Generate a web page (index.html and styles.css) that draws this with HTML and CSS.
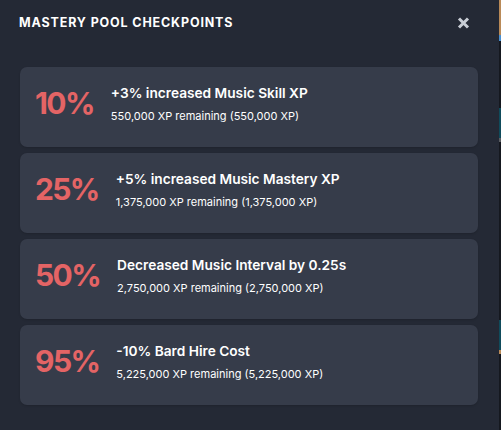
FILE: index.html
```html
<!DOCTYPE html>
<html>
<head>
<meta charset="utf-8">
<link rel="stylesheet" href="styles.css">
</head>
<body>
<div class="page">
  <div class="modal">
    <div class="header">
      <h2 class="title">MASTERY POOL CHECKPOINTS</h2>
      <button class="close" aria-label="Close">
        <svg width="13" height="12" viewBox="0 0 13 12"><path d="M2 1.5 L11 10.5 M11 1.5 L2 10.5" stroke="#c8cdd5" stroke-width="3" stroke-linecap="butt"/></svg>
      </button>
    </div>
    <div class="list">
      <div class="card">
        <div class="pct">10%</div>
        <div class="info">
          <div class="name">+3% increased Music Skill XP</div>
          <div class="sub">550,000 XP remaining (550,000 XP)</div>
        </div>
      </div>
      <div class="card">
        <div class="pct">25%</div>
        <div class="info">
          <div class="name">+5% increased Music Mastery XP</div>
          <div class="sub">1,375,000 XP remaining (1,375,000 XP)</div>
        </div>
      </div>
      <div class="card">
        <div class="pct">50%</div>
        <div class="info">
          <div class="name">Decreased Music Interval by 0.25s</div>
          <div class="sub">2,750,000 XP remaining (2,750,000 XP)</div>
        </div>
      </div>
      <div class="card">
        <div class="pct">95%</div>
        <div class="info">
          <div class="name">-10% Bard Hire Cost</div>
          <div class="sub">5,225,000 XP remaining (5,225,000 XP)</div>
        </div>
      </div>
    </div>
  </div>
  <div class="strip">
    <div class="seg s-orange"></div>
    <div class="seg s-blue"></div>
    <div class="seg s-dark1"></div>
    <div class="seg s-teal1"></div>
    <div class="seg s-gray"></div>
    <div class="seg s-dark2"></div>
    <div class="seg s-teal2"></div>
    <div class="seg s-orange2"></div>
    <div class="seg s-dark3"></div>
  </div>
</div>
</body>
</html>
```
FILE: styles.css
```css
* { box-sizing: border-box; }
html, body { margin: 0; padding: 0; }
body {
  width: 501px;
  height: 430px;
  overflow: hidden;
  font-family: Inter, "Noto Sans", sans-serif;
  background: #15181f;
}
.page {
  display: flex;
  width: 501px;
  height: 430px;
}
.modal {
  width: 499px;
  height: 430px;
  background: #242935;
  padding: 0 21px 0 20px;
  display: flex;
  flex-direction: column;
}
.header {
  height: 67px;
  display: flex;
  align-items: flex-start;
  justify-content: space-between;
  padding-top: 14px;
}
.title {
  margin: 0 0 0 -1px;
  color: #ffffff;
  font-size: 12.5px;
  font-weight: 700;
  letter-spacing: 0.85px;
  line-height: 18px;
}
.close {
  background: none;
  border: 0;
  padding: 0;
  margin: 3px 8px 0 0;
  width: 13px;
  height: 12px;
  display: flex;
}
.list {
  display: flex;
  flex-direction: column;
  gap: 6px;
}
.card {
  height: 80px;
  background: #363c4a;
  border-radius: 7px;
  box-shadow: 0 1px 2px rgba(0,0,0,0.15);
  display: flex;
  align-items: center;
  padding: 0 15px 8px 15px;
}
.pct {
  color: #e46465;
  font-size: 30px;
  font-weight: 700;
  line-height: 36px;
  letter-spacing: -1.6px;
  margin-right: 17px;
}
.info {
  display: flex;
  flex-direction: column;
  gap: 5px;
}
.name {
  color: #ffffff;
  font-size: 13.7px;
  font-weight: 600;
  line-height: 20px;
}
.sub {
  color: #ffffff;
  font-size: 11px;
  font-weight: 400;
  line-height: 16px;
}
.strip {
  width: 2px;
  height: 430px;
  display: flex;
  flex-direction: column;
}
.seg { width: 2px; }
.s-orange { height: 35px; background: #b98a58; }
.s-blue { height: 6px; background: #4a8fcf; }
.s-dark1 { height: 67px; background: #15181f; }
.s-teal1 { height: 30px; background: #0f4b5b; }
.s-gray { height: 4px; background: #5a5d62; }
.s-dark2 { height: 178px; background: #15181f; }
.s-teal2 { height: 30px; background: #0f4b5b; }
.s-orange2 { height: 4px; background: #b98a58; }
.s-dark3 { height: 76px; background: #15181f; }
```
